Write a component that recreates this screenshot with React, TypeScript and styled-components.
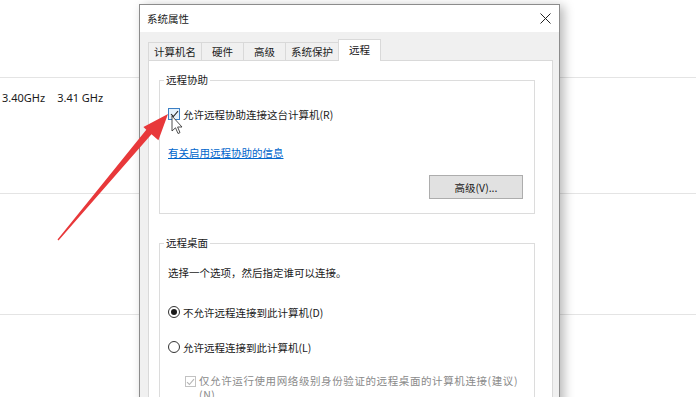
import styled, { createGlobalStyle } from "styled-components";

const GlobalStyle = createGlobalStyle`
  html, body {
    margin: 0;
    padding: 0;
    background: #ffffff;
  }
  body {
    font-family: "Noto Sans CJK SC", "Noto Sans", sans-serif;
    overflow: hidden;
  }
`;

const Page = styled.div`
  position: relative;
  width: 696px;
  height: 397px;
  overflow: hidden;
  background: #ffffff;
`;

/* the settings page behind the dialog */
const Backdrop = styled.div`
  display: flex;
  flex-direction: column;
`;

const InfoRow = styled.div<{ $h: number }>`
  height: ${(p) => p.$h}px;
  border-bottom: 1px solid #e4e4e4;
  padding: 12px 0 0 2px;
  box-sizing: content-box;
  font-family: "Noto Sans", sans-serif;
  font-size: 11px;
  line-height: 16px;
  color: #1a1a1a;
`;

const InfoValue = styled.span`
  margin-right: 12px;
`;

const Dialog = styled.div`
  position: absolute;
  left: 139px;
  top: 4px;
  width: 421px;
  height: 420px;
  box-sizing: border-box;
  border: 1px solid #8c8c8c;
  background: #f0f0f0;
  box-shadow: 4px 2px 10px rgba(0, 0, 0, 0.28);
  display: flex;
  flex-direction: column;
`;

const TitleBar = styled.div`
  height: 27px;
  background: #ffffff;
  display: flex;
  align-items: center;
  justify-content: space-between;
  padding: 0 8px 0 7px;
  font-size: 10.5px;
  color: #1a1a1a;
`;

const CloseButton = styled.div`
  width: 12px;
  height: 12px;
  display: flex;
  align-items: center;
  justify-content: center;
  margin-top: -1px;
`;

const DialogBody = styled.div`
  flex: 1;
  padding: 7px 6px 0 8px;
  display: flex;
  flex-direction: column;
`;

const TabStrip = styled.div`
  display: flex;
  align-items: flex-end;
  height: 21px;
  position: relative;
  z-index: 1;
`;

const Tab = styled.div<{ $active?: boolean }>`
  height: ${(p) => (p.$active ? 22 : 18)}px;
  margin-bottom: ${(p) => (p.$active ? -1 : 0)}px;
  min-width: 43px;
  padding: 0 5px;
  box-sizing: border-box;
  margin-left: -1px;
  border: 1px solid #d9d9d9;
  border-bottom: none;
  background: ${(p) => (p.$active ? "#ffffff" : "#f0f0f0")};
  display: flex;
  align-items: center;
  justify-content: center;
  padding-bottom: ${(p) => (p.$active ? 3 : 0)}px;
  font-size: 10.5px;
  color: #1a1a1a;
  &:first-child {
    margin-left: 0;
  }
`;

const Panel = styled.div`
  flex: 1;
  background: #ffffff;
  border: 1px solid #d9d9d9;
  padding: 12px 0 0 10px;
`;

const GroupBox = styled.fieldset<{ $gap?: number }>`
  width: 376px;
  box-sizing: border-box;
  margin: ${(p) => p.$gap ?? 0}px 0 0 0;
  padding: 0 11px 14px 8px;
  border: 1px solid #dcdcdc;
  min-width: 0;
`;

const Legend = styled.legend`
  margin-left: -4px;
  padding: 0 2px;
  font-size: 10.5px;
  line-height: 14px;
  color: #1a1a1a;
`;

const OptionRow = styled.div<{ $top: number; $indent?: number }>`
  display: flex;
  align-items: center;
  gap: 3px;
  margin-top: ${(p) => p.$top}px;
  padding-left: ${(p) => p.$indent ?? 0}px;
  height: 16px;
  font-size: 10.5px;
  color: #1a1a1a;
  white-space: nowrap;
`;

const CheckBox = styled.span<{ $hover?: boolean }>`
  width: 12px;
  height: 12px;
  box-sizing: border-box;
  border: 1px solid ${(p) => (p.$hover ? "#3b7fc4" : "#333")};
  background: ${(p) => (p.$hover ? "#e5f1fb" : "#fff")};
  display: flex;
  align-items: center;
  justify-content: center;
  flex-shrink: 0;
`;

const Radio = styled.span<{ $checked?: boolean }>`
  width: 12px;
  height: 12px;
  box-sizing: border-box;
  border: 1px solid #333;
  border-radius: 50%;
  display: flex;
  align-items: center;
  justify-content: center;
  flex-shrink: 0;
  &::after {
    content: "";
    width: 6px;
    height: 6px;
    border-radius: 50%;
    background: ${(p) => (p.$checked ? "#1a1a1a" : "transparent")};
  }
`;

const InfoLink = styled.a`
  display: block;
  margin-top: 23px;
  line-height: 16px;
  font-size: 10.5px;
  color: #0066cc;
  text-decoration: underline;
`;

const ButtonRow = styled.div`
  display: flex;
  justify-content: flex-end;
  margin-top: 14px;
`;

const Button = styled.div`
  width: 94px;
  height: 24px;
  box-sizing: border-box;
  border: 1px solid #adadad;
  background: #e1e1e1;
  display: flex;
  align-items: center;
  justify-content: center;
  font-size: 10.5px;
  color: #1a1a1a;
`;

const Hint = styled.div`
  margin-top: 15px;
  line-height: 16px;
  font-size: 10.5px;
  color: #1a1a1a;
`;

const DisabledRow = styled.div`
  display: flex;
  align-items: flex-start;
  gap: 3px;
  margin-top: 19px;
  padding-left: 17px;
  font-size: 10.5px;
  line-height: 14px;
  color: #8a8a8a;
`;

const DisabledBox = styled.span`
  width: 11px;
  height: 11px;
  margin-top: 2px;
  box-sizing: border-box;
  border: 1px solid #c2c2c2;
  display: flex;
  align-items: center;
  justify-content: center;
  flex-shrink: 0;
`;

const DisabledText = styled.span`
  white-space: nowrap;
  letter-spacing: 0.6px;
`;

const Overlay = styled.svg`
  position: absolute;
  left: 0;
  top: 0;
  pointer-events: none;
`;

const Tick = ({ color }: { color: string }) => (
  <svg width="9" height="8" viewBox="0 0 9 8">
    <path d="M1 4.2 L3.4 6.5 L8 1.2" fill="none" stroke={color} strokeWidth="1.1" />
  </svg>
);

const tabs = ["计算机名", "硬件", "高级", "系统保护", "远程"];

export default function App() {
  return (
    <>
      <GlobalStyle />
      <Page>
        <Backdrop>
          <InfoRow $h={65} />
          <InfoRow $h={103}>
            <InfoValue>3.40GHz</InfoValue>
            <span>3.41 GHz</span>
          </InfoRow>
          <InfoRow $h={108} />
          <InfoRow $h={80} />
        </Backdrop>

        <Dialog>
          <TitleBar>
            <span>系统属性</span>
            <CloseButton>
              <svg width="11" height="11" viewBox="0 0 11 11">
                <path d="M0.5 0.5 L10.5 10.5 M10.5 0.5 L0.5 10.5" stroke="#222" strokeWidth="1" />
              </svg>
            </CloseButton>
          </TitleBar>
          <DialogBody>
            <TabStrip>
              {tabs.map((t) => (
                <Tab key={t} $active={t === "远程"}>
                  {t}
                </Tab>
              ))}
            </TabStrip>
            <Panel>
              <GroupBox>
                <Legend>远程协助</Legend>
                <OptionRow $top={19}>
                  <CheckBox $hover>
                    <Tick color="#2a2a2a" />
                  </CheckBox>
                  允许远程协助连接这台计算机(R)
                </OptionRow>
                <InfoLink>有关启用远程协助的信息</InfoLink>
                <ButtonRow>
                  <Button>高级(V)...</Button>
                </ButtonRow>
              </GroupBox>

              <GroupBox $gap={22}>
                <Legend>远程桌面</Legend>
                <Hint>选择一个选项，然后指定谁可以连接。</Hint>
                <OptionRow $top={23}>
                  <Radio $checked />
                  不允许远程连接到此计算机(D)
                </OptionRow>
                <OptionRow $top={19}>
                  <Radio />
                  允许远程连接到此计算机(L)
                </OptionRow>
                <DisabledRow>
                  <DisabledBox>
                    <Tick color="#b5b5b5" />
                  </DisabledBox>
                  <DisabledText>
                    仅允许运行使用网络级别身份验证的远程桌面的计算机连接(建议)
                    <br />
                    (N)
                  </DisabledText>
                </DisabledRow>
              </GroupBox>
            </Panel>
          </DialogBody>
        </Dialog>

        <Overlay width="696" height="397" viewBox="0 0 696 397">
          <polygon
            points="168,114 158.4,140.2 151.5,134.2 58.5,240.5 57.5,239.6 146.3,129.7 143.4,127"
            fill="#e8383a"
          />
          <path
            d="M172 116 L172 131 L175.5 127.8 L178 133.5 L180 132.6 L177.6 127 L182 127 Z"
            fill="#ffffff"
            stroke="#3a3a3a"
            strokeWidth="0.9"
            strokeLinejoin="round"
          />
        </Overlay>
      </Page>
    </>
  );
}
